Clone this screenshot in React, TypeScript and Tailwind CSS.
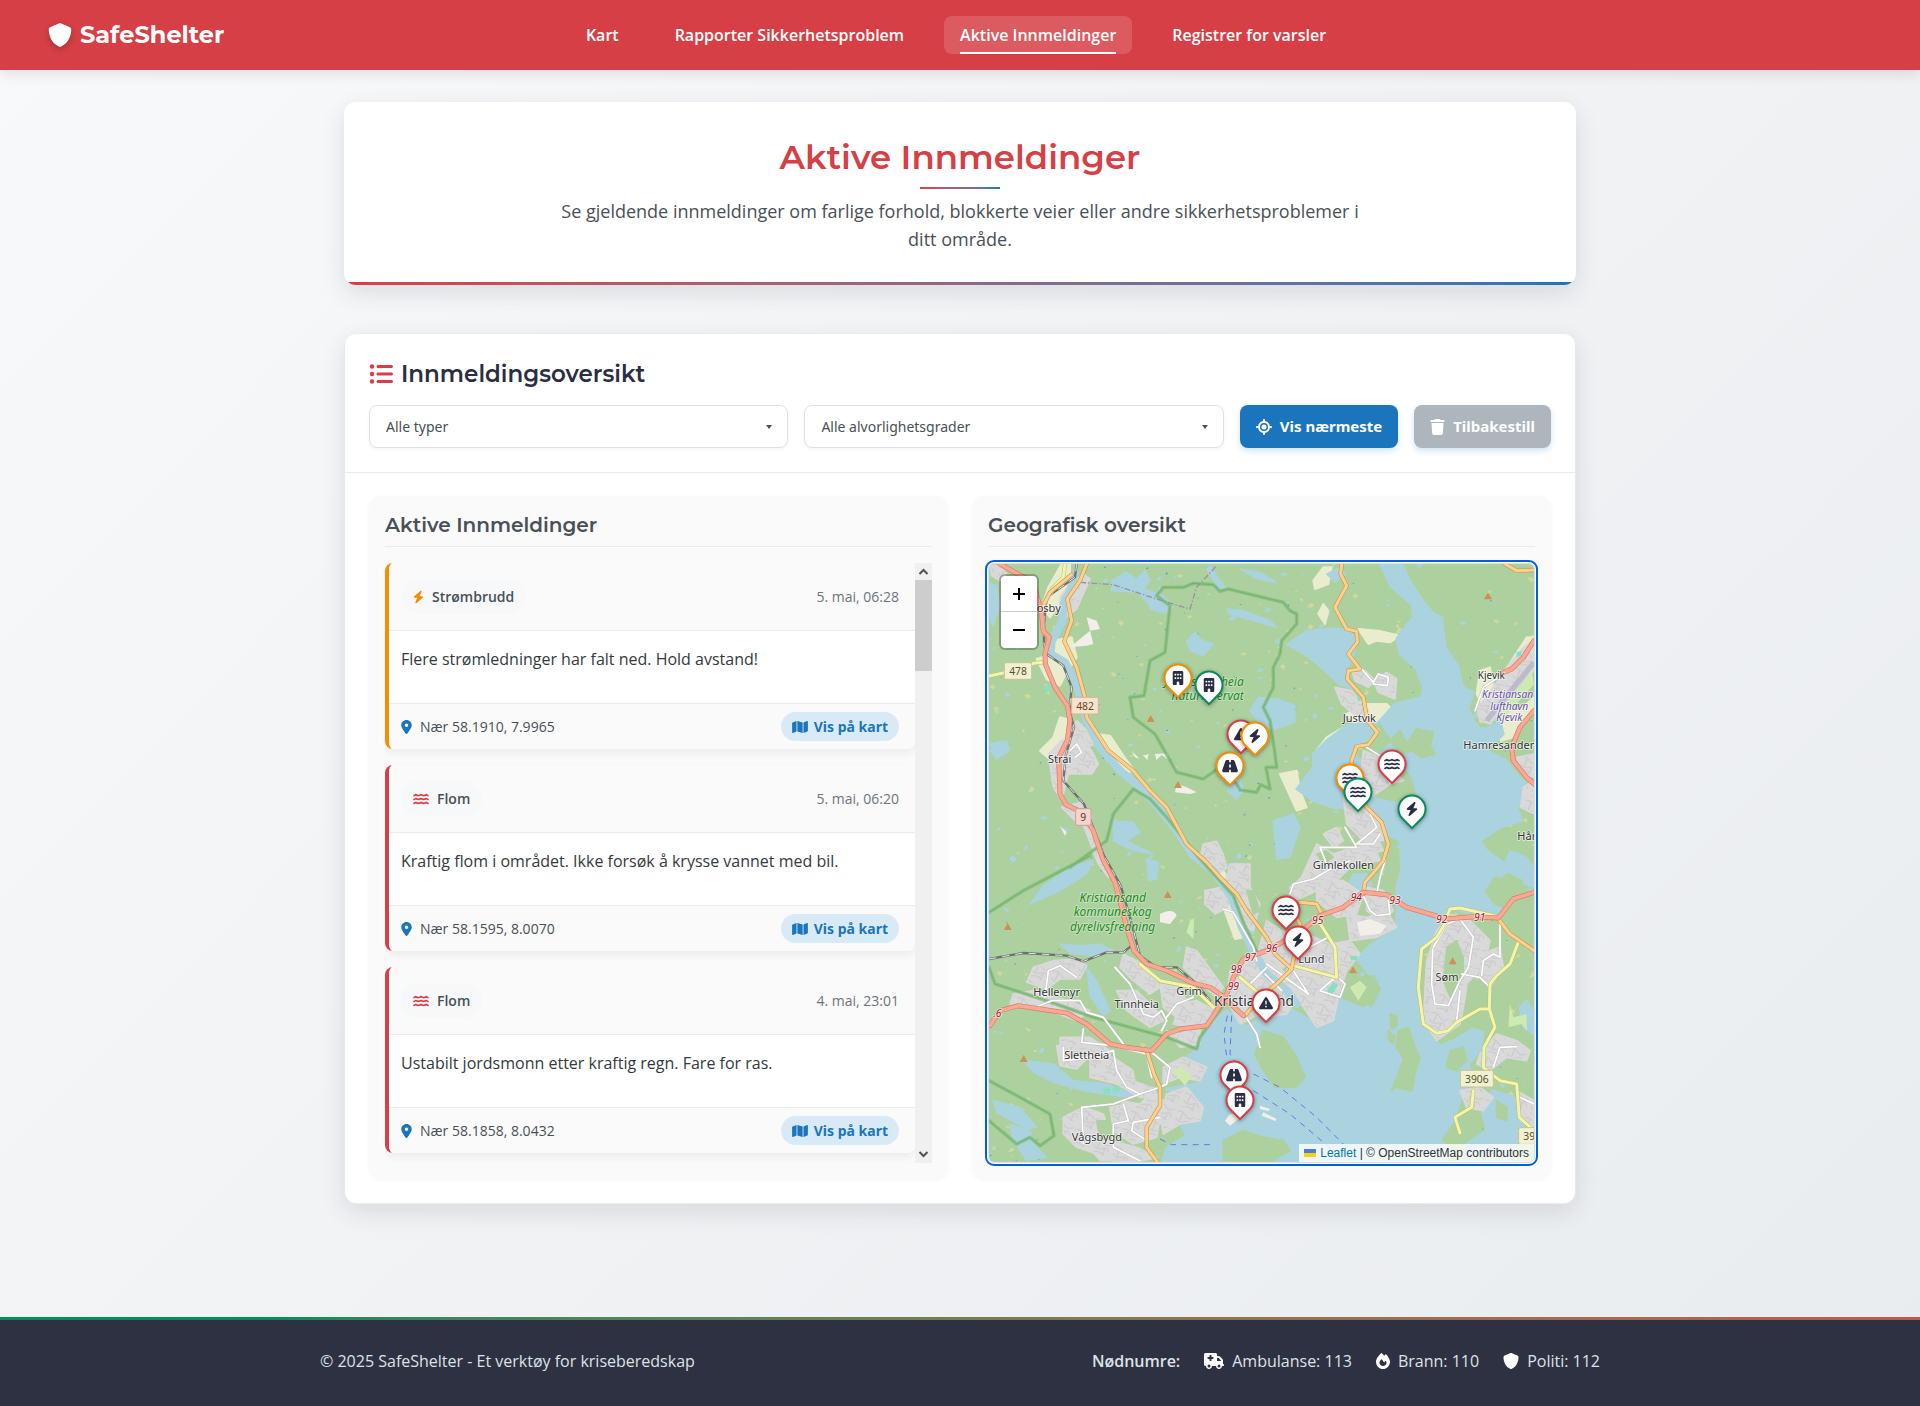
import type { IconType } from "react-icons";
import {
  FaBolt,
  FaBuilding,
  FaFire,
  FaListUl,
  FaLocationCrosshairs,
  FaLocationDot,
  FaMap,
  FaRoad,
  FaShield,
  FaTrash,
  FaTriangleExclamation,
  FaTruckMedical,
  FaWater,
} from "react-icons/fa6";

const heading = "font-['Montserrat','Inter',sans-serif]";
const control = "font-['Noto_Sans',sans-serif]";

const navLinks = [
  { label: "Kart", active: false },
  { label: "Rapporter Sikkerhetsproblem", active: false },
  { label: "Aktive Innmeldinger", active: true },
  { label: "Registrer for varsler", active: false },
];

type Report = {
  type: string;
  icon: IconType;
  time: string;
  text: string;
  place: string;
  border: string;
  tint: string;
};

const reports: Report[] = [
  {
    type: "Strømbrudd",
    icon: FaBolt,
    time: "5. mai, 06:28",
    text: "Flere strømledninger har falt ned. Hold avstand!",
    place: "Nær 58.1910, 7.9965",
    border: "border-[#f78c00]",
    tint: "text-[#f78c00]",
  },
  {
    type: "Flom",
    icon: FaWater,
    time: "5. mai, 06:20",
    text: "Kraftig flom i området. Ikke forsøk å krysse vannet med bil.",
    place: "Nær 58.1595, 8.0070",
    border: "border-[#d63f45]",
    tint: "text-[#d63f45]",
  },
  {
    type: "Flom",
    icon: FaWater,
    time: "4. mai, 23:01",
    text: "Ustabilt jordsmonn etter kraftig regn. Fare for ras.",
    place: "Nær 58.1858, 8.0432",
    border: "border-[#d63f45]",
    tint: "text-[#d63f45]",
  },
];

/* ---------- Map ---------- */

const MAP_X = 27;
const MAP_Y = 30;
const MAP_W = 1635;
const MAP_H = 1794;

const RED = "#d63f45";
const ORANGE = "#f78c00";
const GREEN = "#0d8a5c";

const markers: { x: number; y: number; color: string; icon: IconType; label: string }[] = [
  { x: 594, y: 372, color: ORANGE, icon: FaBuilding, label: "Bygningsskade" },
  { x: 687, y: 393, color: GREEN, icon: FaBuilding, label: "Bygningsskade" },
  { x: 783, y: 540, color: RED, icon: FaTriangleExclamation, label: "Fare" },
  { x: 825, y: 547, color: ORANGE, icon: FaBolt, label: "Strømbrudd" },
  { x: 1236, y: 630, color: RED, icon: FaWater, label: "Flom" },
  { x: 750, y: 637, color: ORANGE, icon: FaRoad, label: "Blokkert vei" },
  { x: 1110, y: 672, color: ORANGE, icon: FaWater, label: "Flom" },
  { x: 1134, y: 715, color: GREEN, icon: FaWater, label: "Flom" },
  { x: 1296, y: 765, color: GREEN, icon: FaBolt, label: "Strømbrudd" },
  { x: 918, y: 1068, color: RED, icon: FaWater, label: "Flom" },
  { x: 954, y: 1158, color: RED, icon: FaBolt, label: "Strømbrudd" },
  { x: 858, y: 1348, color: RED, icon: FaTriangleExclamation, label: "Fare" },
  { x: 761, y: 1564, color: RED, icon: FaRoad, label: "Blokkert vei" },
  { x: 780, y: 1638, color: RED, icon: FaBuilding, label: "Bygningsskade" },
];

function makeRandom(seed: number) {
  let s = seed;
  return () => {
    s = (s * 16807) % 2147483647;
    return s / 2147483647;
  };
}

function scatter(seed: number, count: number, min: number, max: number) {
  const rnd = makeRandom(seed);
  let d = "";
  for (let i = 0; i < count; i++) {
    const x = MAP_X + rnd() * MAP_W;
    const y = MAP_Y + rnd() * MAP_H;
    const w = min + rnd() * (max - min);
    const h = w * (0.25 + rnd() * 0.4);
    const k = (rnd() - 0.5) * w * 0.9;
    d += `M${x.toFixed(0)} ${y.toFixed(0)}l${(w * 0.5).toFixed(0)} ${(-h + k).toFixed(0)}l${(w * 0.5).toFixed(0)} ${(h * 0.6).toFixed(0)}l${(-w * 0.4).toFixed(0)} ${(h * 0.9).toFixed(0)}z`;
  }
  return d;
}

const pondPath = scatter(77, 260, 5, 24);
const marshPath = scatter(4211, 300, 5, 22);
const brookPath = scatter(913, 150, 5, 8);

const lakes = [
  "M395 80l45-25 30 20 25-25 15 30-20 25 60 20 20 25-50 10-50-45-75-5z",
  "M500 140l60 5 18 15-20 18-45-12z",
  "M620 260l25-25 15 20 40 15-30 35-40-15z",
  "M690 35l20 30 25 35-20 5-35-60z",
  "M740 165l50 5 80 30 20 20-60-18-80-20z",
  "M780 45l60 10 50 30-60-10z",
  "M80 560l-50 30 15 20 40-15z",
  "M30 90l20 5 10 60-20 60-10-20z",
  "M400 800l60 5 20 30-40 25 80 40-60-10-60-30z",
  "M30 570l40-10 20 25-40 30z",
  "M740 680l40-5 10 30-20 30-25-20z",
  "M835 430l60 5 50 20 0 50-60 20-45-15-30-40z",
  "M920 272l60-42 80-8 45 5 28 30-15 60-20 30 25 60-45-15-70-65-42-30z",
  "M240 1170l60 5 60-5 40 20-60 15-70-8z",
  "M320 1240l30 40 40 90-20 15-40-60z",
  "M150 1050l90-40 80-50 20-40-60 15-90 60z",
  "M130 1520l90 10 60 50 100 10 80 30-20 10-130-20-90-25-60-30z",
  "M90 1710l60 20 10 40 40 40-60 10-40-60z",
  "M500 915l35 10-5 50-25 5z",
  "M830 1080l-40 40 30 20z",
  "M40 1640l80 20 50 60-30 5-90-50z",
  "M1040 60l40-20 15 20-30 25z",
  "M880 800l60-20 20 40-30 90-40 5z",
  "M1120 960l40 0 15 30-20 40-40-10-10-30z",
  "M1590 890l50 20 22 30 0 60-60-20-30-50z",
];

const farmland = [
  "M245 30l25 0 0 60-30 60-30 40-25-30 20-60z",
  "M215 260l60-10 15 60-20 30-40-5-25-20z",
  "M170 315l60-20 30 60-20 40-40-20z",
  "M350 540l40 5 40 60 30 40-20 15-60-50z",
  "M180 590l40-40 20-60 20 5-10 80-30 50z",
  "M1000 80l30-40 25 0-10 50-40 15z",
  "M1015 180l15-30 15 20-10 40z",
  "M1135 225l60 5 65 15-30 20-40-5-25 10z",
  "M1100 480l60-30 60 0 20 20-50 30-60 15z",
  "M1000 600l40-50 50-30 20 10-50 50-30 60z",
  "M900 660l50-10 10 60 20 50-30 10z",
  "M1500 350l30-10 10 60 40 40-60 40-30-60z",
  "M1640 250l22 0 0 60-60 60-20-30z",
  "M1560 470l60 0 40-40 2 40-60 80-40 10z",
  "M730 1060l30-10 20 50 10 50-25 5z",
  "M680 900l30 10 30 60-20 5z",
];

const sea = [
  "M1200 30L1265 30 1290 80 1320 130 1360 180 1385 190 1395 280 1435 340 1440 370 1450 400 1480 415 1465 460 1480 500 1500 525 1530 520 1560 500 1570 540 1540 570 1470 585 1520 590 1580 620 1600 650 1640 690 1635 740 1610 760 1625 800 1560 820 1500 860 1520 890 1590 940 1600 980 1540 960 1515 1010 1570 1070 1520 1088 1440 1070 1400 1062 1370 1145 1320 1185 1310 1245 1320 1315 1318 1405 1380 1475 1430 1455 1480 1425 1510 1435 1500 1490 1465 1530 1475 1570 1440 1640 1420 1700 1380 1755 1405 1790 1390 1830 545 1830 560 1780 620 1745 600 1705 665 1655 560 1605 670 1585 570 1545 640 1495 665 1450 700 1400 740 1370 800 1420 830 1400 880 1345 950 1375 990 1400 1040 1395 1080 1335 1150 1365 1195 1335 1180 1275 1130 1215 1170 1175 1250 1125 1250 995 1265 950 1260 860 1200 830 1140 760 1060 760 1000 740 950 705 1000 640 1000 600 1040 560 1100 515 1165 505 1190 530 1120 590 1150 640 1200 600 1240 560 1200 500 1245 450 1325 430 1330 400 1310 345 1260 300 1250 255 1275 220 1300 190 1295 150 1235 100z",
  "M1500 1640l40-30 60 20 30 60 10 60-50 30 0 50-90 20-60-20 20-60 60-40z",
  "M1620 1360l20-20 22 40 0 60-30-20z",
];

const islands = [
  "M1230 560l30-30 20 40 30-45 50 10-10 40 15 25-40 10-30-20-30 10z",
  "M1195 600l60 20 40 60 10 40-60-30-50-30z",
  "M1150 690l60-10 80 20 15 40-60 0-90-20z",
  "M1255 1430l30-10 20 60 15 30-20 60-30-20 0-40-20-30z",
  "M1230 1380l20 5 0 30-15 10z",
  "M1265 1530l20-10 20 40-10 50-50-10-10 10 20-50z",
  "M1225 1430l20 20-5 20-15-15z",
  "M1410 1490l40-10 10 40-30 30-30-10z",
  "M850 1430l60 20 40 60 25 60-30 30-60 0-40-60-20-40z",
  "M730 1760l60-30 60 20 60 10 20 30-60 34-140-5z",
  "M1515 1010l30-20 40-30 40 20 10 50-30 40-60-20z",
  "M1580 1480l30-20 50 10 0 100-30 10-40-40z",
  "M1140 1275l40-10 20 40-25 50-40-20z",
  "M1550 1640l30 20 0 40-30-10z",
];

const town = [
  "M30 35l30 0 20 25-20 20-25-15z",
  "M240 130l30-40 40-30 20 15-40 90-40 30z",
  "M205 600l40-40 50-10 40 40 20 40-20 30-70 0-20 80-25-40z",
  "M270 540l20-40 30 30 20 40-30 20z",
  "M245 760l60-15 30 45-50 10z",
  "M305 800l30 20 60 130-10 20-30-40z",
  "M670 870l40-8 20 40 10 40-30 20-20-40-30-10z",
  "M1065 400l50 10 50 60-20 30-60-50z",
  "M1115 350l40 0 30 30-20 20-40-20z",
  "M1180 380l40-25 30 20-5 60-50-20z",
  "M1150 590l50 20 70 70-40 10-70 50-20-60z",
  "M1090 730l60 10 50 60 10 60-60 0-50-50z",
  "M1030 840l40-20 20 40-30 20z",
  "M1010 870l50 30 60-20 60-10 20 50-80 10-60 60-60 10-40-20z",
  "M1140 850l50 0 20 40-50 10z",
  "M930 1000l60-50 40 10 20 30-60 30-50 20z",
  "M1010 980l80 0 60 40-20 60-60 10-60-50z",
  "M1160 1000l50 10 30 60-30 30-50-30z",
  "M1100 1080l60 10 60-20 30 50-60 30-80 10z",
  "M750 930l60 0 0 70 30 50-20 80-40-20-50-100z",
  "M675 1010l50-10 20 60-40 20-30-30z",
  "M960 1130l90 40 60-10 30 40-40 50-20 60-20 90-50 20-40-60-60-80z",
  "M860 1100l60 40 20 80-60 40-50-50z",
  "M780 1230l60-30 80 60 40 60-40 60-60 10-70-60z",
  "M750 1250l40 40 50 90-60 30-40-70z",
  "M160 1240l60-20 70-5 30 20-20 40-60 0-40 30-60-20z",
  "M100 1320l60-10 60 20 50 10 60 30-40 30-80-30-60-10-60-10z",
  "M430 1200l40 20 40 30 30 50-30 20-50-40-40-40z",
  "M410 1310l60 0 60 60 20 30-40 20-70-50z",
  "M540 1290l50 10 40 50-40 40-40-30z",
  "M620 1180l30 10 80 110-20 30-60-50-40-40z",
  "M600 1350l50-10 60 30-10 30-70 20-50-10z",
  "M240 1450l90 0 60 40 0 20-150-10z",
  "M230 1475l60 0 30 40-30 30-50-10z",
  "M330 1510l70 0 60 40 60 20 10 60-50 0-70-40-80-20z",
  "M420 1640l60 10 40-40 40 40-20 60-80-10z",
  "M560 1430l40 10 60-30 0 60-60 10z",
  "M550 1540l60-30 70 30-20 40-60-10-50 20z",
  "M560 1620l60-20 50 60-10 40-60 10-50 30-10-60z",
  "M250 1690l60-30 60 20 20 60-40 60-60-20-40-40z",
  "M390 1660l50-10 50 30 50 10-10 60-70 20-60-40z",
  "M310 1760l80 0 80 20 60 30-60 14-110-5z",
  "M1370 1130l40-50 60 20 60 60-20 90-50 60-20 100-70 50-40-60 10-180z",
  "M1500 1250l30-60 30-10 10 60-40 60z",
  "M1500 1500l50-60 60 20 40 30-10 30-60-10-50 40-40-20z",
  "M1440 1610l60-10 40 30-30 40-50-10z",
  "M1610 1610l52 30 0 80-40-20z",
  "M1490 460l30-30 60-90 50-60 30-20 0 90-80 100-50 60-30-10z",
  "M1630 700l32-20 0 100-40-20z",
  "M1610 610l52-10 0 70-30-10z",
];

const clearings = [
  "M1400 1180l30-20 20 50 0 60-40 60-20-50z",
  "M1465 1290l20-20 10 30-20 60-20 20z",
  "M460 1540l50 20 20 40-60-20z",
  "M350 1700l40 0 10 40-40 20z",
  "M1010 900l30-10 20 20-30 20z",
  "M800 1010l20 0 20 60-20 10z",
];

const trunk = [
  "M60 30L110 58 160 85 185 180 190 232 208 250 195 300 196 330 225 400 262 455 270 500 262 560 236 610 240 720 258 752 300 772 340 830 368 915 405 985 425 1060 440 1120 462 1190 500 1230 560 1250 640 1288 690 1300 740 1335",
  "M30 1415L60 1370 115 1355 260 1377 320 1410 390 1470 440 1480 515 1490 560 1440 600 1425 680 1415 710 1370 740 1320 765 1260 790 1215 860 1190 960 1135 1020 1085 1090 1060 1150 1015 1220 1022 1280 1060 1400 1095 1480 1088 1555 1092 1600 1035 1662 1015",
  "M1662 260L1630 310 1595 345 1560 360",
  "M1662 470L1620 520 1595 580 1600 620 1640 670 1662 690",
  "M740 1340L790 1385",
];

const primary = [
  "M320 30L300 80 262 135 275 200 253 262 290 340 315 430 320 490 385 590 460 650 510 710 560 760 620 870 680 925 720 970 770 1020 800 1070 860 1150 885 1200 935 1245",
  "M190 155L210 115 275 62",
  "M1085 30L1082 60 1100 95 1065 160 1100 225 1130 232 1132 265 1105 300 1140 345 1105 350 1102 375 1150 430 1162 500 1192 535 1165 572 1130 577 1115 620 1115 680 1160 760 1205 805 1225 870 1210 920 1190 945 1155 985 1150 1020",
  "M1575 30L1610 50 1662 48",
  "M1555 1095L1590 1140 1662 1190",
  "M935 1245L890 1290 840 1330 795 1385",
  "M960 1045L1010 1050 1028 1085",
  "M930 1060L960 1110 935 1245",
  "M500 1490L522 1560 540 1600 540 1655 500 1720 500 1780 532 1824",
];

const secondary = [
  "M27 366L80 355 130 345 160 328 190 325",
  "M1395 1100L1410 1065 1440 1062 1555 1088",
  "M1400 1100L1370 1150 1325 1185 1315 1300 1330 1410 1370 1438 1405 1430 1430 1405 1500 1365 1528 1365 1530 1290 1550 1265 1590 1230 1615 1165",
  "M1528 1365L1545 1420 1512 1480 1510 1540 1560 1580 1610 1590 1618 1690 1662 1730",
  "M1480 1610L1475 1660 1425 1690 1440 1737",
  "M480 1230L540 1280 640 1300 700 1360",
  "M1015 1100L1065 1180 1070 1270 940 1235",
  "M255 30L250 70 215 105",
  "M780 1270L850 1330",
];

const streets = [
  "M195 1330L205 1250 240 1235 290 1270",
  "M170 1358L215 1340 300 1340 320 1375 370 1390 400 1430 430 1470",
  "M310 1425L305 1465 400 1475 500 1500 515 1570",
  "M250 1480L250 1520 300 1515 400 1490 410 1550 440 1600 480 1620",
  "M310 1770L305 1660 400 1650 480 1620 540 1600",
  "M430 1650L445 1700 400 1710 400 1780 480 1820",
  "M540 1690L460 1705 455 1730 500 1760",
  "M515 1495L570 1540 560 1590 540 1600",
  "M405 1240L450 1290 490 1380 520 1390 545 1370 560 1400 545 1430",
  "M560 1390L590 1350 640 1330",
  "M1145 345L1180 385 1195 360 1225 370 1222 395 1180 390",
  "M1160 580L1200 605 1230 690",
  "M1170 780L1190 820 1130 870 1180 870 1200 840",
  "M1095 820L1130 880 1020 880 1040 930",
  "M930 1020L940 990 1000 975 1060 940 1110 920",
  "M1150 1025L1170 1070 1190 1085 1230 1080 1225 1040",
  "M1190 1020L1200 970 1215 920",
  "M1360 1180L1400 1110 1440 1095 1480 1150 1465 1240 1440 1280 1405 1355 1365 1350 1355 1290 1358 1185",
  "M1445 1260L1500 1270 1530 1300",
  "M1505 1265L1510 1220 1540 1200 1560 1210 1560 1110",
  "M1440 1310L1430 1400",
  "M1540 1540L1560 1480 1610 1478",
  "M1620 1630L1662 1650",
  "M730 1065L760 1075 820 1180 830 1220",
  "M860 1230L985 1320",
  "M940 1250L985 1320",
  "M960 1195L1045 1150",
  "M1080 1275L1095 1290 1080 1330 1020 1310 1060 1275",
  "M855 1260L905 1310",
  "M810 1290L860 1240",
  "M795 1385L830 1440 840 1480",
  "M1485 470L1510 400 1570 360",
  "M270 590L290 570 305 595 285 610",
  "M250 680L235 640",
];

const rail = [
  "M290 30L285 70 200 130 192 210 192 270 200 300 250 335 275 400 268 470 282 520 258 600 250 680 312 750 372 905 422 995 450 1090 480 1205 530 1240 590 1240 650 1290 690 1340",
  "M27 1215L130 1197 260 1205 310 1222 380 1195 430 1195 455 1175",
];

const reserve = [
  "M720 640L670 675 590 655 525 540 460 490 450 430 492 425 510 320 555 295 565 200 570 155 530 125 550 100 610 100 640 88 700 92 720 112 745 105 910 145 930 170 950 180 950 210 905 260 900 300 880 340 880 400 850 460 870 500 885 600 890 640 858 640 870 705 842 692 830 715 780 708 770 690z",
  "M270 940L380 860 400 780 460 705 510 735 560 790 660 915 760 1025 790 1105 830 1190",
  "M740 1340L660 1450 650 1485 560 1450 340 1390 200 1340 45 1290 27 1240",
  "M27 1075L130 1010 330 905",
  "M27 1580L120 1630 210 1680 222 1745 180 1775 150 1750 110 1770 27 1700",
];

const ferries = [
  "M742 1385L732 1440 740 1510",
  "M755 1385L750 1500 770 1530",
  "M820 1560L900 1600 1010 1690 1090 1770",
  "M820 1610L930 1680 1060 1790 1080 1824",
  "M540 1755L575 1772 690 1772 700 1765",
];

const peaks = [
  [512, 494], [594, 692], [563, 1022], [83, 1118], [131, 1514], [1524, 126], [1119, 1248], [1418, 1221],
];

const towns: { x: number; y: number; t: string; size?: number; anchor?: "start" | "middle" }[] = [
  { x: 170, y: 174, t: "osby", anchor: "start" },
  { x: 239, y: 628, t: "Strai" },
  { x: 1138, y: 503, t: "Justvik" },
  { x: 1534, y: 375, t: "Kjevik", size: 30 },
  { x: 1450, y: 586, t: "Hamresanden", anchor: "start" },
  { x: 1612, y: 857, t: "Hånes", anchor: "start" },
  { x: 1090, y: 945, t: "Gimlekollen" },
  { x: 230, y: 1326, t: "Hellemyr" },
  { x: 470, y: 1361, t: "Tinnheia" },
  { x: 627, y: 1322, t: "Grim" },
  { x: 994, y: 1226, t: "Lund" },
  { x: 1401, y: 1280, t: "Søm" },
  { x: 320, y: 1516, t: "Slettheia" },
  { x: 351, y: 1762, t: "Vågsbygd" },
  { x: 822, y: 1355, t: "Kristiansand", size: 41 },
];

const exits: [number, number, string][] = [
  [1129, 1042, "94"], [1245, 1050, "93"], [1385, 1107, "92"], [1499, 1101, "91"],
  [1013, 1109, "95"], [875, 1194, "96"], [811, 1221, "97"], [769, 1257, "98"], [760, 1307, "99"], [52, 1390, ".6"],
];

const shields: { x: number; y: number; w: number; t: string; fill: string; edge: string; ink: string }[] = [
  { x: 73, y: 326, w: 82, t: "478", fill: "#f1f0d3", edge: "#c5c48f", ink: "#55531f" },
  { x: 275, y: 430, w: 80, t: "482", fill: "#f6e3cd", edge: "#d9b48a", ink: "#6f4316" },
  { x: 287, y: 764, w: 46, t: "9", fill: "#f4d5cf", edge: "#d99a8e", ink: "#7a2b1d" },
  { x: 1441, y: 1549, w: 99, t: "3906", fill: "#f1f0d3", edge: "#c5c48f", ink: "#55531f" },
  { x: 1616, y: 1721, w: 99, t: "3906", fill: "#f1f0d3", edge: "#c5c48f", ink: "#55531f" },
];

function Lines({ paths, color, width, dash, opacity }: { paths: string[]; color: string; width: number; dash?: string; opacity?: number }) {
  return (
    <g fill="none" stroke={color} strokeWidth={width} strokeLinejoin="round" strokeLinecap={dash ? "butt" : "round"} strokeDasharray={dash} opacity={opacity}>
      {paths.map((d) => (
        <path key={d} d={d} />
      ))}
    </g>
  );
}

function Areas({ paths, fill, edge, width }: { paths: string[]; fill: string; edge: string; width: number }) {
  return (
    <g fill={fill} stroke={edge} strokeWidth={width} strokeLinejoin="round">
      {paths.map((d) => (
        <path key={d} d={d} />
      ))}
    </g>
  );
}

function MapCanvas() {
  return (
    <svg
      viewBox={`${MAP_X} ${MAP_Y} ${MAP_W} ${MAP_H}`}
      preserveAspectRatio="xMidYMid slice"
      className="block size-full font-['Noto_Sans',sans-serif]"
      role="img"
      aria-label="Kart over Kristiansand"
    >
      <defs>
        <pattern id="blocks" width="64" height="58" patternUnits="userSpaceOnUse" patternTransform="rotate(24)">
          <rect width="64" height="58" fill="#dad9d9" />
          <path d="M4 10q16-9 28 2t28-4M8 30q14 12 30 0t20 4M14 50q18-12 34-2M22 8v24M44 28v22" fill="none" stroke="#c3c2c2" strokeWidth="2.5" />
        </pattern>
      </defs>
      <rect x={MAP_X} y={MAP_Y} width={MAP_W} height={MAP_H} fill="#add19e" />
      <path d={marshPath} fill="#d6d99f" opacity="0.8" />
      <path d={pondPath} fill="#aad3df" />
      <path d={brookPath} fill="#5a9fe0" />
      <Areas paths={farmland} fill="#e9edce" edge="#e9edce" width={6} />
      <Areas paths={lakes} fill="#aad3df" edge="#aad3df" width={4} />
      <Areas paths={sea} fill="#aad3df" edge="#aad3df" width={8} />
      <Areas paths={islands} fill="#add19e" edge="#add19e" width={6} />
      <Areas paths={town} fill="url(#blocks)" edge="#dad9d9" width={5} />
      <Areas paths={clearings} fill="#add19e" edge="#add19e" width={4} />
      <path
        d="M540 1080q40-20 50 5l-20 25-30-5zM1130 1105l40-10 50 20-20 25-60 5zM590 690l30 10 30 15-20 5-45-5zM455 590l10 20 14 5zM490 605l16-5-4 18zM525 600l4 18 16-15 20 15-2-20zM240 815l20 20-5 10zM840 1655l30 10-5 6-25-6zM735 1700l15-20 25 0 0 15-25 20zM850 1675l40 20-5 6-40-16zM270 280l50-5 20-5-20-80 30 10 10 25-30 5z"
        fill="#f2efe9"
      />
      <path d="M1550 480l60-70 45-60 7 40-70 80-40 35zM640 1155l-20-20 10-35 12-8zM580 1555l20-20 35 30-20 30zM1110 1300l30-20 20 20-25 40zM1590 1350l10 40 40-10 0 50-15-20-40 10z" fill="#cdebb0" />
      <path d="M1520 500L1662 325" stroke="#bbbbcc" strokeWidth="16" />
      <path d="M190 400l18-10 8 15-20 12zM370 1605l20-5 0 20-20 0zM398 1602l20-8 2 18-20 8zM1040 1310l20-25 15 8-20 30zM1112 1205l20 0 0 14-20 0zM1130 430l16-10 4 14-14 8zM1610 295l14-4 0 14-14 4z" fill="#88e0be" />

      <Lines
        paths={["M285 60L270 110 250 150 248 200 215 262 212 300 255 325 285 380 305 440 320 500 360 580 420 650 480 700 540 765 590 830 640 905 700 950 755 1030 785 1120 820 1190 860 1260 920 1310 950 1350"]}
        color="#aad3df"
        width={24}
      />
      <Lines paths={reserve} color="#7fbb78" width={11} opacity={0.7} />
      <Lines paths={reserve} color="#64a863" width={3} opacity={0.6} />
      <Lines paths={["M300 85L400 92 530 135 630 165 650 100 710 35"]} color="#9d8fa3" width={4} dash="18 6 4 6" />
      <Lines paths={ferries} color="#6a73ee" width={3} dash="18 16" />

      <Lines paths={streets} color="#c4c3c3" width={8} />
      <Lines paths={streets} color="#ffffff" width={5} />
      <Lines paths={rail} color="#707070" width={7} />
      <Lines paths={rail} color="#e6e6e6" width={3} dash="22 18" />
      <Lines paths={secondary} color="#b9bd72" width={12} />
      <Lines paths={secondary} color="#f3f5a9" width={9} />
      <Lines paths={primary} color="#c99a4e" width={13} />
      <Lines paths={primary} color="#fcd08f" width={9} />
      <Lines paths={trunk} color="#dd7a63" width={15} />
      <Lines paths={trunk} color="#f9a993" width={11} />

      <g fill="#d08f55">
        {peaks.map(([x, y]) => (
          <path key={`${x}-${y}`} d={`M${x} ${y - 11}l12 21h-24z`} />
        ))}
      </g>

      <g fontSize="31" textAnchor="middle">
        {shields.map((s) => (
          <g key={`${s.x}-${s.t}`}>
            <rect x={s.x} y={s.y} width={s.w} height="50" rx="5" fill={s.fill} stroke={s.edge} strokeWidth="3" />
            <text x={s.x + s.w / 2} y={s.y + 37} fill={s.ink}>
              {s.t}
            </text>
          </g>
        ))}
      </g>

      <g stroke="#ffffff" strokeOpacity="0.7" strokeWidth="5" strokeLinejoin="round" style={{ paintOrder: "stroke" }}>
        <g fill="#333333">
          {towns.map((l) => (
            <text key={l.t} x={l.x} y={l.y} fontSize={l.size ?? 33} textAnchor={l.anchor ?? "middle"}>
              {l.t}
            </text>
          ))}
        </g>
        <g fill="#1a8a1a" fontSize="36" fontStyle="italic" textAnchor="middle" strokeOpacity="0.4">
          <text x="672" y="396">Jegersbergheia</text>
          <text x="683" y="438">naturreservat</text>
          <text x="398" y="1044">Kristiansand</text>
          <text x="398" y="1087">kommuneskog</text>
          <text x="398" y="1131">dyrelivsfredning</text>
        </g>
        <g fill="#6a4fa3" fontSize="31" fontStyle="italic" textAnchor="middle">
          <text x="1592" y="432">Kristiansand</text>
          <text x="1588" y="467">lufthavn</text>
          <text x="1588" y="502">Kjevik</text>
        </g>
        <g fill="#9b1c36" fontSize="31" fontStyle="italic" textAnchor="middle">
          {exits.map(([x, y, t]) => (
            <text key={t} x={x} y={y}>
              {t}
            </text>
          ))}
        </g>
      </g>
    </svg>
  );
}

function MapMarkers() {
  return (
    <>
      {markers.map(({ x, y, color, icon: Icon, label }) => (
        <button
          key={`${x}-${y}`}
          type="button"
          aria-label={label}
          className="absolute -mt-[15px] -ml-[15px] h-9 w-[30px] drop-shadow-[0_1px_2px_rgba(0,0,0,0.4)]"
          style={{ left: `${((x - MAP_X) / MAP_W) * 100}%`, top: `${((y - MAP_Y) / MAP_H) * 100}%` }}
        >
          <svg viewBox="0 0 30 36" className="absolute inset-0 size-full" aria-hidden="true">
            <path d="M15 34.1L5.45 24.55A13.5 13.5 0 1 1 24.55 24.55Z" fill="#fff" stroke={color} strokeWidth="2" />
          </svg>
          <Icon className="absolute top-2 left-[7px] h-[14px] w-4 text-[#2b2d42]" aria-hidden="true" />
        </button>
      ))}
    </>
  );
}

function MapView() {
  return (
    <div className="relative h-[600px] overflow-hidden rounded-md border border-[#dee2e6] outline-2 outline-offset-1 outline-[#0060df]">
      <MapCanvas />
      <MapMarkers />
      <div className="absolute top-2.5 left-2.5 flex flex-col overflow-hidden rounded-md border-2 border-black/25 bg-white bg-clip-padding">
        <button type="button" aria-label="Zoom inn" className="flex size-9 items-center justify-center border-b border-[#ccc]">
          <svg viewBox="0 0 14 14" className="size-3.5" aria-hidden="true">
            <path d="M7 1v12M1 7h12" stroke="#000" strokeWidth="2" />
          </svg>
        </button>
        <button type="button" aria-label="Zoom ut" className="flex size-9 items-center justify-center">
          <svg viewBox="0 0 14 14" className="size-3.5" aria-hidden="true">
            <path d="M1 7h12" stroke="#000" strokeWidth="2" />
          </svg>
        </button>
      </div>
      <div className="absolute right-0 bottom-0 flex h-[18px] items-center gap-1 bg-white/80 px-[5px] font-['Liberation_Sans',Arial,sans-serif] text-xs text-[#333]">
        <svg viewBox="0 0 12 8" className="h-2 w-3" aria-hidden="true">
          <path fill="#4c7be1" d="M0 0h12v4H0z" />
          <path fill="#ffd500" d="M0 4h12v4H0z" />
        </svg>
        <span>
          <a href="#leaflet" className="text-[#0078a8]">
            Leaflet
          </a>{" "}
          | © OpenStreetMap contributors
        </span>
      </div>
    </div>
  );
}

/* ---------- Page ---------- */

function Header() {
  return (
    <header className="relative grid h-[70px] grid-cols-[1fr_auto_1fr] items-center bg-[#d63f45] px-12 text-white shadow-[0_4px_12px_rgba(0,0,0,0.1)]">
      <a href="#hjem" className={`flex items-center gap-2 text-2xl font-bold ${heading}`}>
        <FaShield className="size-6 drop-shadow-[0_2px_3px_rgba(0,0,0,0.25)]" aria-hidden="true" />
        SafeShelter
      </a>
      <nav className="flex gap-6 pr-2">
        {navLinks.map((l) => (
          <a
            key={l.label}
            href="#side"
            aria-current={l.active ? "page" : undefined}
            className={l.active ? "rounded-lg bg-white/15 px-4 font-semibold" : "px-4 font-semibold"}
          >
            <span className={l.active ? "block border-b-2 border-white pt-1.5 pb-1 leading-[26px]" : "block pt-1.5 pb-1 leading-[26px]"}>
              {l.label}
            </span>
          </a>
        ))}
      </nav>
    </header>
  );
}

function Hero() {
  return (
    <section className="overflow-hidden rounded-xl bg-white shadow-[0_8px_24px_rgba(43,45,66,0.12)]">
      <div className="px-8 pt-8 pb-[29px] text-center">
        <h1 className={`text-[34px] leading-[46px] font-semibold text-[#d63f45] ${heading}`}>Aktive Innmeldinger</h1>
        <div className="mx-auto mt-[7px] mb-2 h-0.5 w-20 bg-linear-to-r from-[#d63f45] to-[#1a75bc]" />
        <p className="mx-auto max-w-[800px] text-lg leading-7 text-[#495057]">
          Se gjeldende innmeldinger om farlige forhold, blokkerte veier eller andre sikkerhetsproblemer i ditt område.
        </p>
      </div>
      <div className="h-[3px] bg-linear-to-r from-[#d63f45] to-[#1a75bc]" />
    </section>
  );
}

function Filter({ id, label, option }: { id: string; label: string; option: string }) {
  return (
    <div className="relative flex-1">
      <select
        id={id}
        aria-label={label}
        className={`h-[43px] w-full appearance-none rounded-lg border border-[#dee2e6] bg-white px-4 text-sm text-[#495057] shadow-[0_2px_4px_rgba(0,0,0,0.04)] ${control}`}
      >
        <option>{option}</option>
      </select>
      <svg viewBox="0 0 6 4" className="pointer-events-none absolute top-5 right-4 h-1 w-1.5" aria-hidden="true">
        <path d="M0 0h6L3 4z" fill="#495057" />
      </svg>
    </div>
  );
}

function ReportCard({ report }: { report: Report }) {
  const Icon = report.icon;
  return (
    <article className={`shrink-0 overflow-hidden rounded-lg border-l-4 bg-white shadow-[0_4px_8px_rgba(0,0,0,0.06)] ${report.border}`}>
      <div className="flex h-[68px] items-center justify-between border-b border-[#e9ecef] bg-[#fafafa] pr-4 pl-3">
        <span className="flex h-[35px] items-center gap-2 rounded-full bg-[#f6f8fa] px-3 text-sm font-semibold text-[#495057]">
          <Icon className={`h-3.5 ${report.tint} ${report.type === "Flom" ? "w-4" : "w-[11px]"}`} aria-hidden="true" />
          {report.type}
        </span>
        <time className="text-sm text-[#6c757d]">{report.time}</time>
      </div>
      <p className="h-[72px] pt-4 pr-4 pl-3 text-base leading-6 text-[#343a40]">{report.text}</p>
      <div className="flex h-[46px] items-center justify-between border-t border-[#e9ecef] bg-[#fafafa] pr-4 pl-3">
        <span className="flex items-center gap-2 text-sm text-[#495057]">
          <FaLocationDot className="h-3.5 w-[11px] text-[#1a75bc]" aria-hidden="true" />
          {report.place}
        </span>
        <button
          type="button"
          className={`flex h-[29px] items-center gap-1.5 rounded-full bg-[#d9eaf7] px-[11px] text-sm font-bold text-[#1a75bc] ${control}`}
        >
          <FaMap className="h-3.5 w-4" aria-hidden="true" />
          Vis på kart
        </button>
      </div>
    </article>
  );
}

function ScrollRail() {
  return (
    <div className="flex w-[17px] shrink-0 flex-col bg-[#f0f0f0]" aria-hidden="true">
      <svg viewBox="0 0 17 17" className="size-[17px]">
        <path d="M4.5 11L8.5 7l4 4" fill="none" stroke="#505050" strokeWidth="2" />
      </svg>
      <div className="h-[91px] bg-[#cdcdcd]" />
      <svg viewBox="0 0 17 17" className="mt-auto size-[17px]">
        <path d="M4.5 6l4 4 4-4" fill="none" stroke="#505050" strokeWidth="2" />
      </svg>
    </div>
  );
}

const panel = "min-w-0 rounded-xl bg-[#fafafa] p-4 shadow-[0_1px_4px_rgba(0,0,0,0.04)]";
const panelTitle = `mb-4 border-b border-[#e9ecef] text-xl leading-[26px] pb-2 font-semibold text-[#495057] ${heading}`;
const action = `flex h-[43px] items-center gap-2 rounded-lg px-4 text-[15px] font-bold text-white shadow-[0_3px_6px_rgba(26,117,188,0.2)] ${control}`;

function Overview() {
  return (
    <section className="mt-12 rounded-xl border border-[#e9ecef] bg-white shadow-[0_8px_24px_rgba(43,45,66,0.12)]">
      <div className="border-b border-[#e9ecef] p-6">
        <h2 className={`flex items-center gap-2 text-[23px] leading-8 font-semibold text-[#2b2d42] ${heading}`}>
          <FaListUl className="size-6 text-[#d63f45]" aria-hidden="true" />
          Innmeldingsoversikt
        </h2>
        <form className="mt-[15px] flex gap-4">
          <Filter id="type" label="Type" option="Alle typer" />
          <Filter id="severity" label="Alvorlighetsgrad" option="Alle alvorlighetsgrader" />
          <button type="button" className={`${action} bg-[#1a75bc]`}>
            <FaLocationCrosshairs className="size-4" aria-hidden="true" />
            Vis nærmeste
          </button>
          <button type="button" className={`${action} bg-[#adb5bd]`}>
            <FaTrash className="h-4 w-[15px]" aria-hidden="true" />
            Tilbakestill
          </button>
        </form>
      </div>
      <div className="grid grid-cols-2 gap-6 p-6 pt-[23px]">
        <div className={panel}>
          <h3 className={panelTitle}>Aktive Innmeldinger</h3>
          <div className="flex h-[600px]">
            <div className="flex min-w-0 flex-1 flex-col gap-4 overflow-y-auto [scrollbar-width:none]">
              {reports.map((r) => (
                <ReportCard key={r.place} report={r} />
              ))}
            </div>
            <ScrollRail />
          </div>
        </div>
        <div className={panel}>
          <h3 className={panelTitle}>Geografisk oversikt</h3>
          <MapView />
        </div>
      </div>
    </section>
  );
}

function Footer() {
  return (
    <footer className="bg-[#2d3142] text-[#dee2e6]">
      <div className="h-[3px] bg-linear-to-r from-[#0d8a5c] from-15% to-[#d63f45] to-125%" />
      <div className="mx-auto flex h-[86px] max-w-[1280px] items-center justify-between pb-1 text-base">
        <p>© 2025 SafeShelter - Et verktøy for kriseberedskap</p>
        <ul className="flex items-center gap-6">
          <li className="font-semibold">Nødnumre:</li>
          <li className="flex items-center gap-2">
            <FaTruckMedical className="h-4 w-5 text-white" aria-hidden="true" />
            Ambulanse: 113
          </li>
          <li className="flex items-center gap-2">
            <FaFire className="h-4 w-3.5 text-white" aria-hidden="true" />
            Brann: 110
          </li>
          <li className="flex items-center gap-2">
            <FaShield className="size-4 text-white" aria-hidden="true" />
            Politi: 112
          </li>
        </ul>
      </div>
    </footer>
  );
}

export default function App() {
  return (
    <div className="flex min-h-screen flex-col bg-[linear-gradient(135deg,#f8f9fa_0%,#e9ecef_100%)] font-['Open_Sans',sans-serif]">
      <Header />
      <main className="mx-auto w-full max-w-[1280px] flex-1 px-6 pt-8 pb-16">
        <Hero />
        <Overview />
      </main>
      <Footer />
    </div>
  );
}
